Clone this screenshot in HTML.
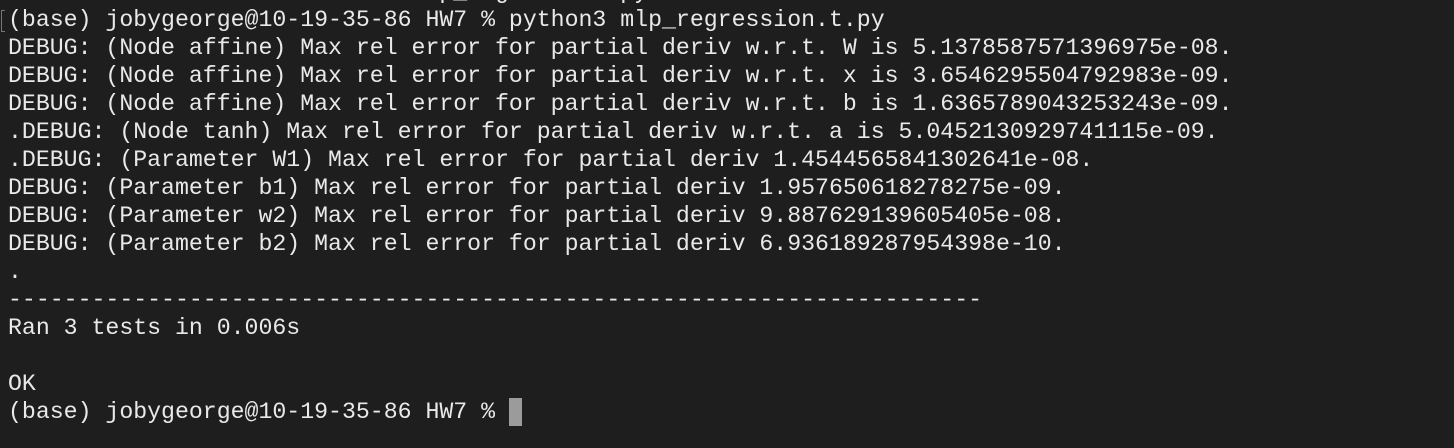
<!DOCTYPE html>
<html><head><meta charset="utf-8"><style>
html,body{margin:0;padding:0;background:#1e1e1e;width:1454px;height:448px;overflow:hidden}
pre{position:absolute;left:8px;top:-22px;margin:0;font-family:"Liberation Mono",monospace;font-size:23.2px;line-height:28px;color:#e9e9e9;white-space:pre}
.cur{display:inline-block;width:13px;height:28px;background:#9b9b9b;vertical-align:top}
.mk{position:absolute;left:1px;top:10px;width:3px;height:20px;border:1.5px solid #777;border-right:none}
</style></head><body>
<div class="mk"></div>
<pre>                             mlp_regression.py
(base) jobygeorge@10-19-35-86 HW7 % python3 mlp_regression.t.py
DEBUG: (Node affine) Max rel error for partial deriv w.r.t. W is 5.1378587571396975e-08.
DEBUG: (Node affine) Max rel error for partial deriv w.r.t. x is 3.6546295504792983e-09.
DEBUG: (Node affine) Max rel error for partial deriv w.r.t. b is 1.6365789043253243e-09.
.DEBUG: (Node tanh) Max rel error for partial deriv w.r.t. a is 5.0452130929741115e-09.
.DEBUG: (Parameter W1) Max rel error for partial deriv 1.4544565841302641e-08.
DEBUG: (Parameter b1) Max rel error for partial deriv 1.957650618278275e-09.
DEBUG: (Parameter w2) Max rel error for partial deriv 9.887629139605405e-08.
DEBUG: (Parameter b2) Max rel error for partial deriv 6.936189287954398e-10.
.
----------------------------------------------------------------------
Ran 3 tests in 0.006s

OK
(base) jobygeorge@10-19-35-86 HW7 % <span class="cur"></span></pre>
</body></html>
